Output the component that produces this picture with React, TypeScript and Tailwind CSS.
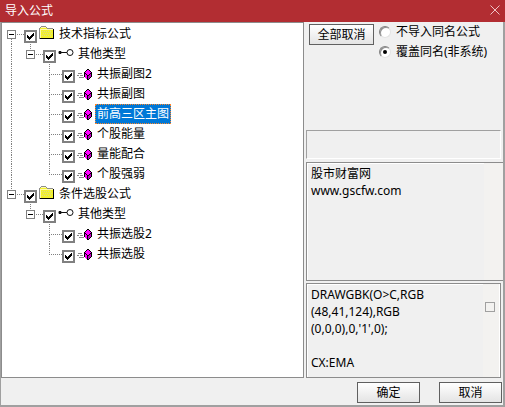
import { useState } from "react";

type Node = {
    name: string;
    children?: Node[];
};

const formulas: Node[] = [
    {
        name: "技术指标公式",
        children: [
            {
                name: "其他类型",
                children: [
                    { name: "共振副图2" },
                    { name: "共振副图" },
                    { name: "前高三区主图" },
                    { name: "个股能量" },
                    { name: "量能配合" },
                    { name: "个股强弱" },
                ],
            },
        ],
    },
    {
        name: "条件选股公式",
        children: [
            {
                name: "其他类型",
                children: [{ name: "共振选股2" }, { name: "共振选股" }],
            },
        ],
    },
];

const code = "DRAWGBK(O>C,RGB\n(48,41,124),RGB\n(0,0,0),0,'1',0);\n\nCX:EMA";
const author = "股市财富网\nwww.gscfw.com";

function FolderIcon() {
    return (
        <svg width="16" height="16" viewBox="0 0 16 16" shapeRendering="crispEdges" aria-hidden="true">
            <path d="M2 1h5v1h1v1h6v11H0V3h1V2h1z" fill="#8c8c8c" />
            <path d="M2 2h5v1h1v1h6v9H1V3h1z" fill="#f2f02c" />
            <path d="M2 2h5v1H2zM1 4h13v1H1zM1 4h1v9H1z" fill="#fffcb0" />
            <path
                d="M3 6h1v1H3zM5 6h1v1H5zM7 6h1v1H7zM9 6h1v1H9zM11 6h1v1h-1zM4 8h1v1H4zM6 8h1v1H6zM8 8h1v1H8zM10 8h1v1h-1zM12 8h1v1h-1zM3 10h1v1H3zM5 10h1v1H5zM7 10h1v1H7zM9 10h1v1H9zM11 10h1v1h-1z"
                fill="#d8d890"
            />
            <path d="M14 4h1v10H1v-1h13z" fill="#000" />
        </svg>
    );
}

function KeyIcon() {
    return (
        <svg width="16" height="16" viewBox="0 0 16 16" aria-hidden="true">
            <path d="M1 6.5h2v2H1zM3 7.5h6" fill="#111" stroke="#111" />
            <circle cx="12" cy="7.5" r="3" fill="#fff" stroke="#111" />
        </svg>
    );
}

function FormulaIcon() {
    return (
        <svg width="16" height="16" viewBox="0 0 16 16" shapeRendering="crispEdges" aria-hidden="true">
            <path d="M1 8h4v1H1zM0 10h2v1H0zM3 10h3v1H3zM2 12h5v1H2z" fill="#888" />
            <path d="M10 4h2v1h1v1h1v1h1v5h-1v1h-1v1h-1v1h-2v-1H9v-1H8v-1H7V7h1V6h1V5h1z" fill="#000" />
            <path d="M10 5h2v1h1v1h1v1h-1v1h-1v1h-2V9H9V8H8V7h1V6h1z" fill="#f0f" />
            <path d="M8 9h1v1h1v4H9v-1H8z" fill="#f0f" />
            <path d="M11 11h1v-1h1V9h1v3h-1v1h-1v1h-1z" fill="#c000c0" />
        </svg>
    );
}

const levelIcons = [<FolderIcon />, <KeyIcon />, <FormulaIcon />];

// dotted guide cell: the upper and lower halves meet at the row's middle
function Guide({ up, down, branch }: { up: boolean; down: boolean; branch?: boolean }) {
    return (
        <span className={`flex h-5 shrink-0 flex-col pl-[9px] ${branch ? "w-[22px]" : "w-[19px]"}`}>
            <span
                className={`h-[11px] border-dotted border-[#808080] ${up ? "border-l" : ""} ${branch ? "border-b" : ""}`}
            />
            <span className={`h-[9px] border-dotted border-[#808080] ${down ? "border-l" : ""}`} />
        </span>
    );
}

function TreeItem({
    node,
    guides,
    first,
    last,
    selected,
    onSelect,
}: {
    node: Node;
    guides: boolean[];
    first: boolean;
    last: boolean;
    selected: string;
    onSelect: (name: string) => void;
}) {
    const [open, setOpen] = useState(true);
    const level = guides.length;
    const active = selected === node.name;

    return (
        <li>
            <div className="flex h-5 items-start whitespace-nowrap">
                {guides.map((line, i) => (
                    <Guide key={i} up={line} down={line} />
                ))}
                <span className="relative flex">
                    <Guide up={level > 0 || !first} down={!last} branch />
                    {node.children && (
                        <button
                            type="button"
                            aria-label={open ? "折叠" : "展开"}
                            onClick={() => setOpen(!open)}
                            className="absolute top-1.5 left-[5px] flex size-[9px] items-center justify-center border border-[#808080] bg-white"
                        >
                            <span className="h-px w-[5px] bg-black" />
                        </button>
                    )}
                </span>
                <span className="mt-1.5 grid shrink-0">
                    <input
                        type="checkbox"
                        defaultChecked
                        aria-label={node.name}
                        className="peer col-start-1 row-start-1 size-[13px] appearance-none border-2 border-[#808080] bg-white"
                    />
                    <svg
                        width="13"
                        height="13"
                        viewBox="0 0 13 13"
                        shapeRendering="crispEdges"
                        className="pointer-events-none invisible col-start-1 row-start-1 peer-checked:visible"
                        aria-hidden="true"
                    >
                        <path d="M3 5h1v1h1v1h1V6h1V5h1V4h1V3h1v3H9v1H8v1H7v1H6v1H5V9H4V8H3z" />
                    </svg>
                </span>
                <span className="mt-px ml-0.5 shrink-0">{levelIcons[level]}</span>
                <button
                    type="button"
                    onClick={() => onSelect(node.name)}
                    className={`ml-0.5 h-5 px-px leading-[18px] ${active ? "border border-dotted border-[#ff8728] bg-[#0078d7] text-white" : "border border-transparent"}`}
                >
                    {node.name}
                </button>
            </div>
            {node.children && open && (
                <ul>
                    {node.children.map((child, i) => (
                        <TreeItem
                            key={child.name}
                            node={child}
                            guides={[...guides, !last]}
                            first={i === 0}
                            last={i === node.children!.length - 1}
                            selected={selected}
                            onSelect={onSelect}
                        />
                    ))}
                </ul>
            )}
        </li>
    );
}

function DialogButton({ children, className }: { children: string; className: string }) {
    return (
        <button
            type="button"
            className={`h-[21px] border border-[#606060] bg-linear-to-b from-white to-[#e4e4e4] leading-[18px] ${className}`}
        >
            {children}
        </button>
    );
}

function ModeRadio({ label, checked }: { label: string; checked?: boolean }) {
    return (
        <label className="flex h-5 items-center gap-[5px] whitespace-nowrap">
            <span className="grid place-items-center">
                <input
                    type="radio"
                    name="mode"
                    defaultChecked={checked}
                    className="peer col-start-1 row-start-1 size-3 appearance-none rounded-full border border-t-[#808080] border-r-[#e3e3e3] border-b-[#e3e3e3] border-l-[#808080] bg-white inset-shadow-[1px_1px_0_#909090]"
                />
                <span className="pointer-events-none invisible col-start-1 row-start-1 size-1 rounded-full bg-black peer-checked:visible" />
            </span>
            {label}
        </label>
    );
}

export default function App() {
    const [selected, setSelected] = useState("前高三区主图");

    return (
        <div className="flex min-h-screen flex-col border-r-2 border-b-2 border-l border-[#a0a0a0] bg-[#f0f0f0] font-['Noto_Sans','Noto_Sans_CJK_SC',sans-serif] text-xs text-black">
            <header className="-mr-0.5 -ml-px flex h-[22px] items-center justify-between bg-[#b22d32] px-[5px] text-white">
                <h1>导入公式</h1>
                <button type="button" aria-label="关闭" className="mb-0.5">
                    <svg width="10" height="10" viewBox="0 0 10 10" stroke="#efc4c5" aria-hidden="true">
                        <path d="M.5.5l9 9M9.5.5l-9 9" />
                    </svg>
                </button>
            </header>

            <main className="flex flex-1 gap-0.5">
                <ul className="min-w-0 flex-1 border border-[#8c8c8c] bg-white pt-px">
                    {formulas.map((node, i) => (
                        <TreeItem
                            key={node.name}
                            node={node}
                            guides={[]}
                            first={i === 0}
                            last={i === formulas.length - 1}
                            selected={selected}
                            onSelect={setSelected}
                        />
                    ))}
                </ul>

                <aside className="flex w-[197px] shrink-0 flex-col">
                    <div className="flex flex-1 items-start gap-[5px] pl-[3px]">
                        <DialogButton className="mt-0.5 w-[65px]">全部取消</DialogButton>
                        <fieldset>
                            <ModeRadio label="不导入同名公式" />
                            <ModeRadio label="覆盖同名(非系统)" checked />
                        </fieldset>
                    </div>
                    <div className="mr-0.5 h-[29px] border border-t-[#a0a0a0] border-r-white border-b-white border-l-[#a0a0a0]" />
                    <div className="mt-[3px] flex h-[119px] border border-r-0 border-[#8c8c8c]">
                        <textarea
                            readOnly
                            aria-label="公式说明"
                            value={author}
                            className="min-w-0 flex-1 resize-none overflow-hidden border-t border-l border-white px-[3px] py-px leading-[17px] outline-none"
                        />
                        <div className="w-[19px] bg-[#f3f2f0]" />
                    </div>
                    <div className="mt-0.5 mr-0.5 flex h-[95px] border border-[#8c8c8c]">
                        <textarea
                            readOnly
                            aria-label="公式源码"
                            value={code}
                            className="min-w-0 flex-1 resize-none overflow-hidden border-t border-l border-white px-[3px] py-px leading-[17px] outline-none"
                        />
                        <div className="w-[17px] border-r border-white bg-[#f3f2f0] pt-[18px] pl-0.5">
                            <div className="size-2.5 border border-[#a0a0a0]" />
                        </div>
                    </div>
                </aside>
            </main>

            <footer className="flex h-[27px] items-end justify-end gap-[19px] pr-px pb-0.5">
                <DialogButton className="w-[63px]">确定</DialogButton>
                <DialogButton className="w-[63px]">取消</DialogButton>
            </footer>
        </div>
    );
}
